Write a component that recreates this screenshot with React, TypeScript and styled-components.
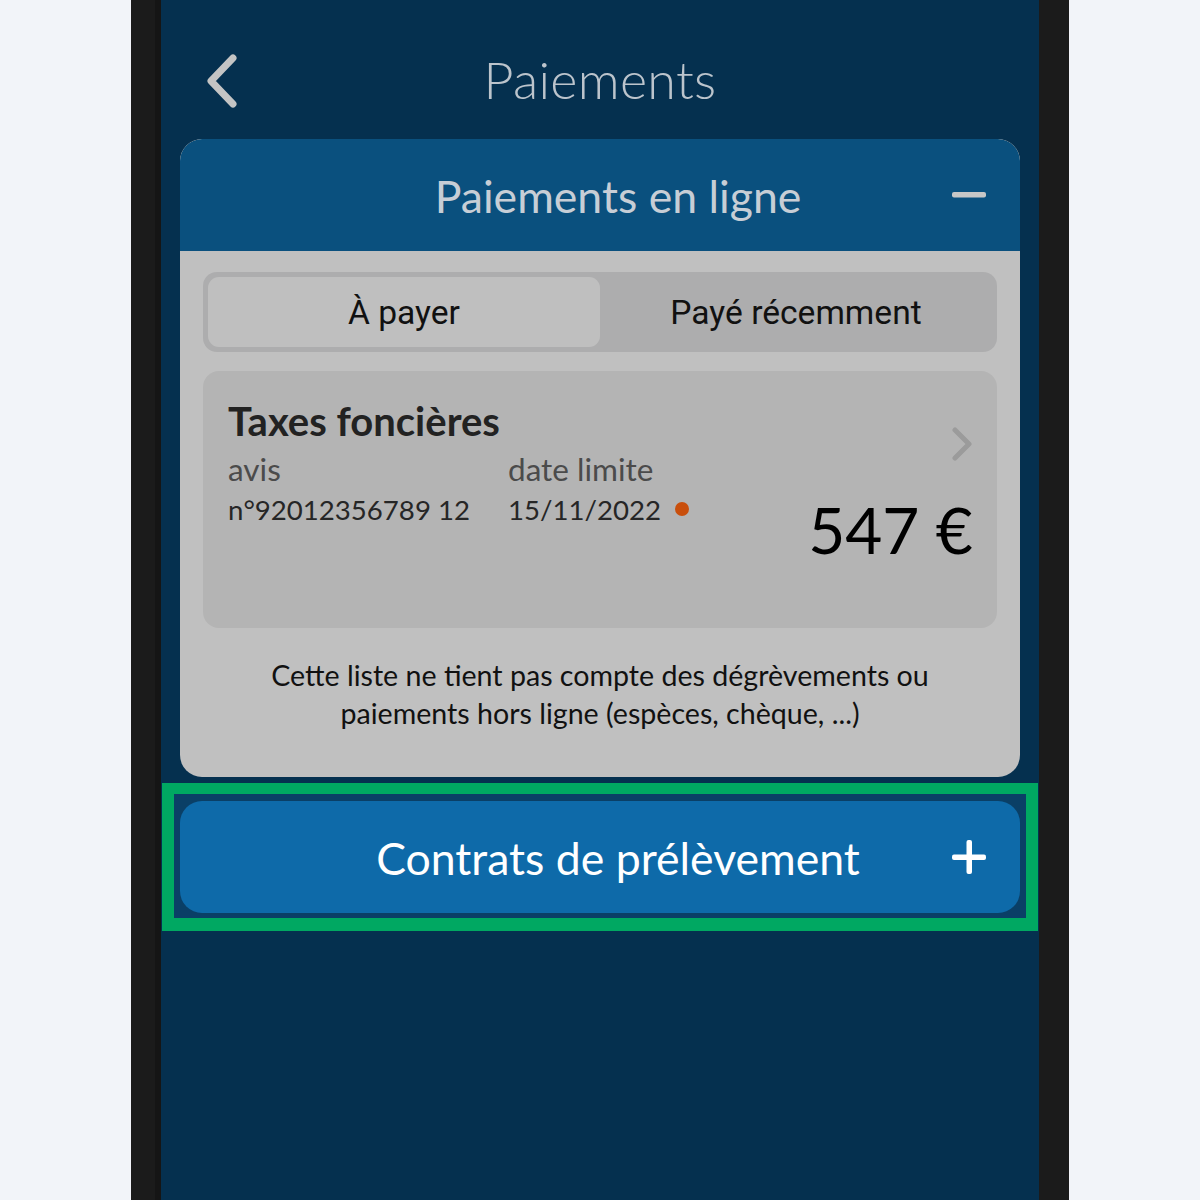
import React, { useState } from "react";
import styled, { createGlobalStyle } from "styled-components";

const GlobalStyle = createGlobalStyle`
  html, body { margin: 0; padding: 0; }
  body {
    background: #f2f4f9;
    font-family: "Lato", "Liberation Sans", sans-serif;
  }
`;

const Page = styled.div`
  width: 1200px;
  height: 1200px;
  display: flex;
  justify-content: center;
  background: #f2f4f9;
  overflow: hidden;
`;

const Phone = styled.div`
  width: 878px;
  height: 1200px;
  background: #1b1b1b;
  border-left: 24px solid #1b1b1b;
  border-right: 30px solid #1b1b1b;
  padding-left: 6px;
  background-clip: content-box;
  box-shadow: inset 6px 0 0 #151515;
  display: flex;
`;

const Screen = styled.div`
  flex: 1;
  background: #05304f;
  display: flex;
  flex-direction: column;
`;

const TopBar = styled.header`
  height: 139px;
  display: grid;
  grid-template-columns: 1fr auto 1fr;
  align-items: center;
  padding: 22px 44px 0;
  box-sizing: border-box;
`;

const BackButton = styled.button`
  justify-self: start;
  width: 34px;
  height: 56px;
  padding: 0;
  border: 0;
  background: none;
  display: flex;
  align-items: center;
  margin-top: 2px;
`;

const ScreenTitle = styled.h1`
  margin: 0;
  font-family: "Lato", sans-serif;
  font-weight: 300;
  font-size: 52px;
  letter-spacing: 0.3px;
  color: #bcc4cc;
  margin-top: -4px;
`;

const Section = styled.section`
  margin: 0 19px;
  border-radius: 22px;
  overflow: hidden;
  background: #c0c0c0;
`;

const SectionHeader = styled.div<{ $tone: "dark" | "bright" }>`
  height: 112px;
  display: flex;
  align-items: center;
  padding: 0 34px 0 104px;
  background: ${(p) => (p.$tone === "dark" ? "#0a507e" : "#0e6aa9")};
  border-radius: ${(p) => (p.$tone === "dark" ? "22px 22px 0 0" : "22px")};
`;

const SectionTitle = styled.span<{ $light?: boolean }>`
  flex: 1;
  text-align: center;
  font-family: "Lato", sans-serif;
  font-size: 44.6px;
  color: ${(p) => (p.$light ? "#ffffff" : "#c7ced6")};
`;

const SectionBody = styled.div`
  padding: 21px 23px 45px;
`;

const Segmented = styled.div`
  height: 80px;
  box-sizing: border-box;
  padding: 5px;
  border-radius: 14px;
  background: #adadae;
  display: grid;
  grid-template-columns: 1fr 1fr;
`;

const Segment = styled.button<{ $active: boolean }>`
  border: 0;
  border-radius: 11px;
  background: ${(p) => (p.$active ? "#bfbfbf" : "transparent")};
  font-family: "Roboto", "Inter", sans-serif;
  font-size: 33.6px;
  color: #111;
  padding: 0;
  cursor: pointer;
`;

const DueCard = styled.div`
  margin-top: 19px;
  height: 257px;
  box-sizing: border-box;
  background: #b4b4b4;
  border-radius: 16px;
  padding: 26px 24px 0 25px;
  display: flex;
`;

const DueInfo = styled.div`
  flex: 1;
  display: flex;
  flex-direction: column;
`;

const DueTitle = styled.div`
  font-family: "Lato", sans-serif;
  font-weight: 700;
  font-size: 40px;
  line-height: 48px;
  color: #222;
`;

const Fields = styled.div`
  display: grid;
  grid-template-columns: 280px auto;
  margin-top: 4px;
`;

const Field = styled.div`
  display: flex;
  flex-direction: column;
`;

const FieldLabel = styled.span`
  font-size: 31.5px;
  line-height: 40px;
  color: #4b4b4b;
`;

const FieldValue = styled.span`
  font-size: 27.6px;
  line-height: 42px;
  color: #262626;
  display: flex;
  align-items: center;
  gap: 14px;
`;

const Dot = styled.span`
  width: 14px;
  height: 14px;
  border-radius: 50%;
  background: #c94f0c;
  margin-top: -2px;
`;

const DueSide = styled.div`
  display: flex;
  flex-direction: column;
  align-items: flex-end;
`;

const Chevron = styled.div`
  margin-top: 30px;
  display: flex;
`;

const Amount = styled.div`
  margin-top: 29px;
  font-family: "Lato", sans-serif;
  font-size: 64px;
  line-height: 80px;
  color: #000;
`;

const Note = styled.p`
  margin: 28px 0 0;
  text-align: center;
  font-family: "Lato", sans-serif;
  font-size: 28.6px;
  line-height: 38px;
  color: #111;
`;

const Highlight = styled.div`
  margin: 6px 1px 0;
  border: 12px solid #00a862;
  border-top-width: 11px;
  border-bottom-width: 13px;
  background: #0a3f66;
  padding: 7px 6px 5px;
`;

const MinusIcon = () => (
  <svg width="34" height="8" viewBox="0 0 34 8">
    <rect x="0" y="1" width="34" height="5.5" rx="2" fill="#c7c7c7" />
  </svg>
);

const PlusIcon = () => (
  <svg width="34" height="34" viewBox="0 0 34 34">
    <rect x="0" y="14.5" width="34" height="5.5" rx="2" fill="#ffffff" />
    <rect x="14.5" y="0" width="5.5" height="34" rx="2" fill="#ffffff" />
  </svg>
);

export default function App() {
  const [tab, setTab] = useState<"due" | "paid">("due");
  return (
    <>
      <GlobalStyle />
      <Page>
        <Phone>
          <Screen>
            <TopBar>
              <BackButton aria-label="Retour">
                <svg width="34" height="56" viewBox="0 0 34 56">
                  <path
                    d="M28 4 L6 27 L28 50"
                    fill="none"
                    stroke="#c4c4c4"
                    strokeWidth="7"
                    strokeLinecap="round"
                    strokeLinejoin="round"
                  />
                </svg>
              </BackButton>
              <ScreenTitle>Paiements</ScreenTitle>
              <span />
            </TopBar>

            <Section>
              <SectionHeader $tone="dark">
                <SectionTitle>Paiements en ligne</SectionTitle>
                <MinusIcon />
              </SectionHeader>
              <SectionBody>
                <Segmented>
                  <Segment $active={tab === "due"} onClick={() => setTab("due")}>
                    À payer
                  </Segment>
                  <Segment $active={tab === "paid"} onClick={() => setTab("paid")}>
                    Payé récemment
                  </Segment>
                </Segmented>

                <DueCard>
                  <DueInfo>
                    <DueTitle>Taxes foncières</DueTitle>
                    <Fields>
                      <Field>
                        <FieldLabel>avis</FieldLabel>
                        <FieldValue>n°92012356789 12</FieldValue>
                      </Field>
                      <Field>
                        <FieldLabel>date limite</FieldLabel>
                        <FieldValue>
                          15/11/2022 <Dot />
                        </FieldValue>
                      </Field>
                    </Fields>
                  </DueInfo>
                  <DueSide>
                    <Chevron>
                      <svg width="22" height="34" viewBox="0 0 22 34">
                        <path
                          d="M4 3 L18 17 L4 31"
                          fill="none"
                          stroke="#9b9b9b"
                          strokeWidth="5"
                          strokeLinecap="round"
                          strokeLinejoin="round"
                        />
                      </svg>
                    </Chevron>
                    <Amount>547 €</Amount>
                  </DueSide>
                </DueCard>

                <Note>
                  Cette liste ne tient pas compte des dégrèvements ou
                  <br />
                  paiements hors ligne (espèces, chèque, ...)
                </Note>
              </SectionBody>
            </Section>

            <Highlight>
              <SectionHeader $tone="bright">
                <SectionTitle $light>Contrats de prélèvement</SectionTitle>
                <PlusIcon />
              </SectionHeader>
            </Highlight>
          </Screen>
        </Phone>
      </Page>
    </>
  );
}
